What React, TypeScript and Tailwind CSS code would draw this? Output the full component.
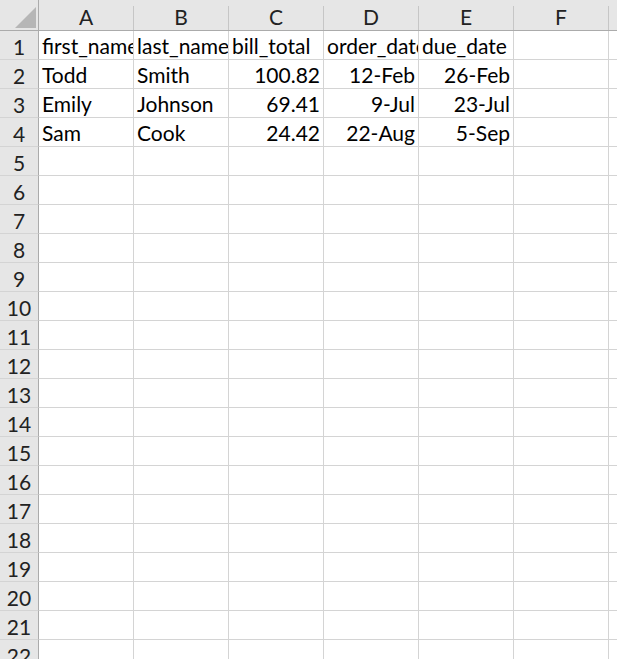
const columns = ["A", "B", "C", "D", "E", "F", ""];

type Cell = { text: string; align?: "left" | "right" };

const data: Cell[][] = [
  [
    { text: "first_name" },
    { text: "last_name" },
    { text: "bill_total" },
    { text: "order_date" },
    { text: "due_date" },
  ],
  [
    { text: "Todd" },
    { text: "Smith" },
    { text: "100.82", align: "right" },
    { text: "12-Feb", align: "right" },
    { text: "26-Feb", align: "right" },
  ],
  [
    { text: "Emily" },
    { text: "Johnson" },
    { text: "69.41", align: "right" },
    { text: "9-Jul", align: "right" },
    { text: "23-Jul", align: "right" },
  ],
  [
    { text: "Sam" },
    { text: "Cook" },
    { text: "24.42", align: "right" },
    { text: "22-Aug", align: "right" },
    { text: "5-Sep", align: "right" },
  ],
];

const rows = Array.from({ length: 22 }, (_, i) => i + 1);

export default function App() {
  return (
    <div
      className="h-[659px] w-[617px] overflow-hidden bg-white text-[21px] text-black"
      style={{ fontFamily: "Lato, 'Liberation Sans', sans-serif" }}
    >
      {/* column header */}
      <div className="flex h-[31px] border-b border-[#ababab] bg-[#e6e6e6]">
        <div className="relative w-[39px] shrink-0 border-r border-[#ababab]">
          <svg
            className="absolute left-[15px] top-[7px]"
            width="21"
            height="21"
            viewBox="0 0 21 21"
          >
            <polygon points="21,0 21,21 0,21" fill="#b6b6b6" />
          </svg>
        </div>
        {columns.map((c, i) => (
          <div key={i} className="flex w-[95px] shrink-0 flex-col">
            <div className="h-[11px]" />
            <div className="flex flex-1 items-center justify-center border-r border-[#c6c6c6] pb-[3px] leading-none text-[#222]">
              {c}
            </div>
          </div>
        ))}
      </div>

      {rows.map((r) => (
        <div key={r} className="flex h-[29px]">
          <div className="flex w-[39px] shrink-0 items-end justify-center border-r border-b border-r-[#ababab] border-b-[#d4d4d4] bg-[#e6e6e6] pb-[2px] leading-none text-[#222]">
            {r}
          </div>
          {columns.map((c, ci) => {
            const cell = data[r - 1]?.[ci];
            return (
              <div
                key={ci}
                className={`flex w-[95px] shrink-0 items-end overflow-hidden whitespace-nowrap border-r border-b border-[#d4d4d4] px-[3px] pb-[3px] leading-none ${
                  cell?.align === "right" ? "justify-end" : "justify-start"
                }`}
              >
                {cell?.text}
              </div>
            );
          })}
        </div>
      ))}
    </div>
  );
}
